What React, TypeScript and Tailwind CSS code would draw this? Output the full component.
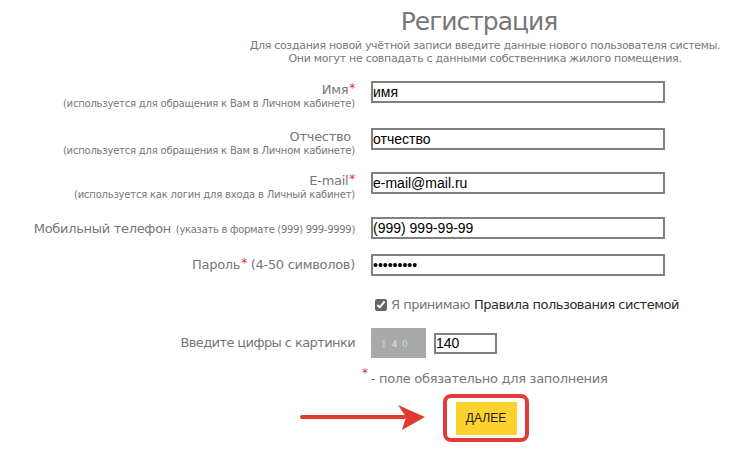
import { useState } from 'react';

const labelFont = { fontFamily: '"DejaVu Sans", Verdana, sans-serif' };

function Star() {
  return <sup className="text-[#e03030] text-[12px] relative top-[-2px] ml-[1px]">*</sup>;
}

function Field({
  value,
  type = 'text',
}: {
  value: string;
  type?: string;
}) {
  return (
    <input
      type={type}
      defaultValue={value}
      className="w-[294px] h-[22px] border-2 border-[#808080] bg-white px-0 text-[14px] text-black outline-none"
      style={{ fontFamily: '"Liberation Sans", Arial, sans-serif' }}
    />
  );
}

export default function App() {
  const [agree, setAgree] = useState(true);

  return (
    <div className="w-[755px] h-[450px] bg-white overflow-hidden text-[#777]" style={labelFont}>
      <div className="ml-[230px] w-[510px] text-center pt-[6px]">
        <h1 className="text-[25px] leading-[32px] tracking-[-1px] pr-[12px]">Регистрация</h1>
        <p className="text-[11px] leading-[13px] tracking-[-0.3px] mt-[1px]">
          Для создания новой учётной записи введите данные нового пользователя системы.
          <br />
          Они могут не совпадать с данными собственника жилого помещения.
        </p>
      </div>

      <div className="mt-[16px] flex flex-col">
        <div className="flex items-start gap-4 h-[47px]">
          <div className="w-[355px] text-right">
            <div className="text-[13px] leading-[18px] tracking-[-0.3px]">
              Имя<Star />
            </div>
            <div className="text-[10px] leading-[12px] tracking-[-0.2px] -mt-[1px]">
              (используется для обращения к Вам в Личном кабинете)
            </div>
          </div>
          <Field value="имя" />
        </div>

        <div className="flex items-start gap-4 h-[44px]">
          <div className="w-[355px] text-right">
            <div className="text-[13px] leading-[18px] tracking-[-0.3px] pr-[4px]">Отчество</div>
            <div className="text-[10px] leading-[12px] tracking-[-0.2px] -mt-[1px]">
              (используется для обращения к Вам в Личном кабинете)
            </div>
          </div>
          <Field value="отчество" />
        </div>

        <div className="flex items-start gap-4 h-[45px]">
          <div className="w-[355px] text-right">
            <div className="text-[13px] leading-[18px] tracking-[-0.3px]">
              E-mail<Star />
            </div>
            <div className="text-[10px] leading-[12px] tracking-[-0.2px] -mt-[1px]">
              (используется как логин для входа в Личный кабинет)
            </div>
          </div>
          <Field value="e-mail@mail.ru" />
        </div>

        <div className="flex items-start gap-4 h-[37px]">
          <div className="w-[355px] text-right leading-[22px] tracking-[-0.3px]">
            <span className="text-[13px]">Мобильный телефон</span>{' '}
            <span className="text-[10px]">(указать в формате (999) 999-9999)</span>
          </div>
          <Field value="(999) 999-99-99" />
        </div>

        <div className="flex items-start gap-4 h-[37px]">
          <div className="w-[355px] text-right text-[13px] leading-[22px] tracking-[-0.3px]">
            Пароль<Star /> (4-50 символов)
          </div>
          <Field value="123456789" type="password" />
        </div>

        <div className="flex items-center h-[30px] ml-[375px] mt-[-1px] text-[13px] tracking-[-0.5px]">
          <input
            type="checkbox"
            checked={agree}
            onChange={(e) => setAgree(e.target.checked)}
            className="w-[12px] h-[12px] mr-[4px] accent-[#666]"
          />
          <span>Я принимаю</span>
          <span className="ml-[4px] text-[#2b2b2b]">Правила пользования системой</span>
        </div>

        <div className="flex items-center gap-4 mt-[8px] h-[30px]">
          <div className="w-[355px] text-right text-[13px] tracking-[-0.6px]">Введите цифры с картинки</div>
          <div className="flex items-center">
            <div
              className="w-[55px] h-[30px] bg-[#a8aaaa] flex items-center pl-[10px] gap-[5px] text-[11px] text-[#d4d4d4]"
              style={{ fontFamily: '"Liberation Serif", serif' }}
            >
              <span>1</span>
              <span className="text-[#e4e4e4]">4</span>
              <span>0</span>
            </div>
            <input
              type="text"
              defaultValue="140"
              className="ml-[8px] w-[63px] h-[21px] border-2 border-[#808080] text-[14px] text-black outline-none"
              style={{ fontFamily: '"Liberation Sans", Arial, sans-serif' }}
            />
          </div>
        </div>

        <div className="ml-[362px] mt-[12px] text-[13px] tracking-[-0.3px] leading-[18px]">
          <span className="text-[#e03030] text-[12px] relative top-[-6px] mr-[3px]">*</span>- поле обязательно для заполнения
        </div>

        <div className="flex items-center mt-[6px] ml-[298px]">
          <svg width="130" height="30" viewBox="0 0 130 30" className="mr-[15px]">
            <line x1="4" y1="14" x2="106" y2="14" stroke="#e03a2f" strokeWidth="4" strokeLinecap="round" />
            <polygon points="100,2 127,14 104,27 108,14" fill="#e03a2f" />
          </svg>
          <div className="w-[86px] h-[48px] border-[4px] border-[#e03a3a] rounded-[8px] flex items-center justify-center">
            <button
              className="w-[61px] h-[33px] bg-[#fdd22e] text-[12px] text-[#222]"
              style={{ fontFamily: '"Liberation Sans", Arial, sans-serif' }}
            >
              ДАЛЕЕ
            </button>
          </div>
        </div>
      </div>
    </div>
  );
}
